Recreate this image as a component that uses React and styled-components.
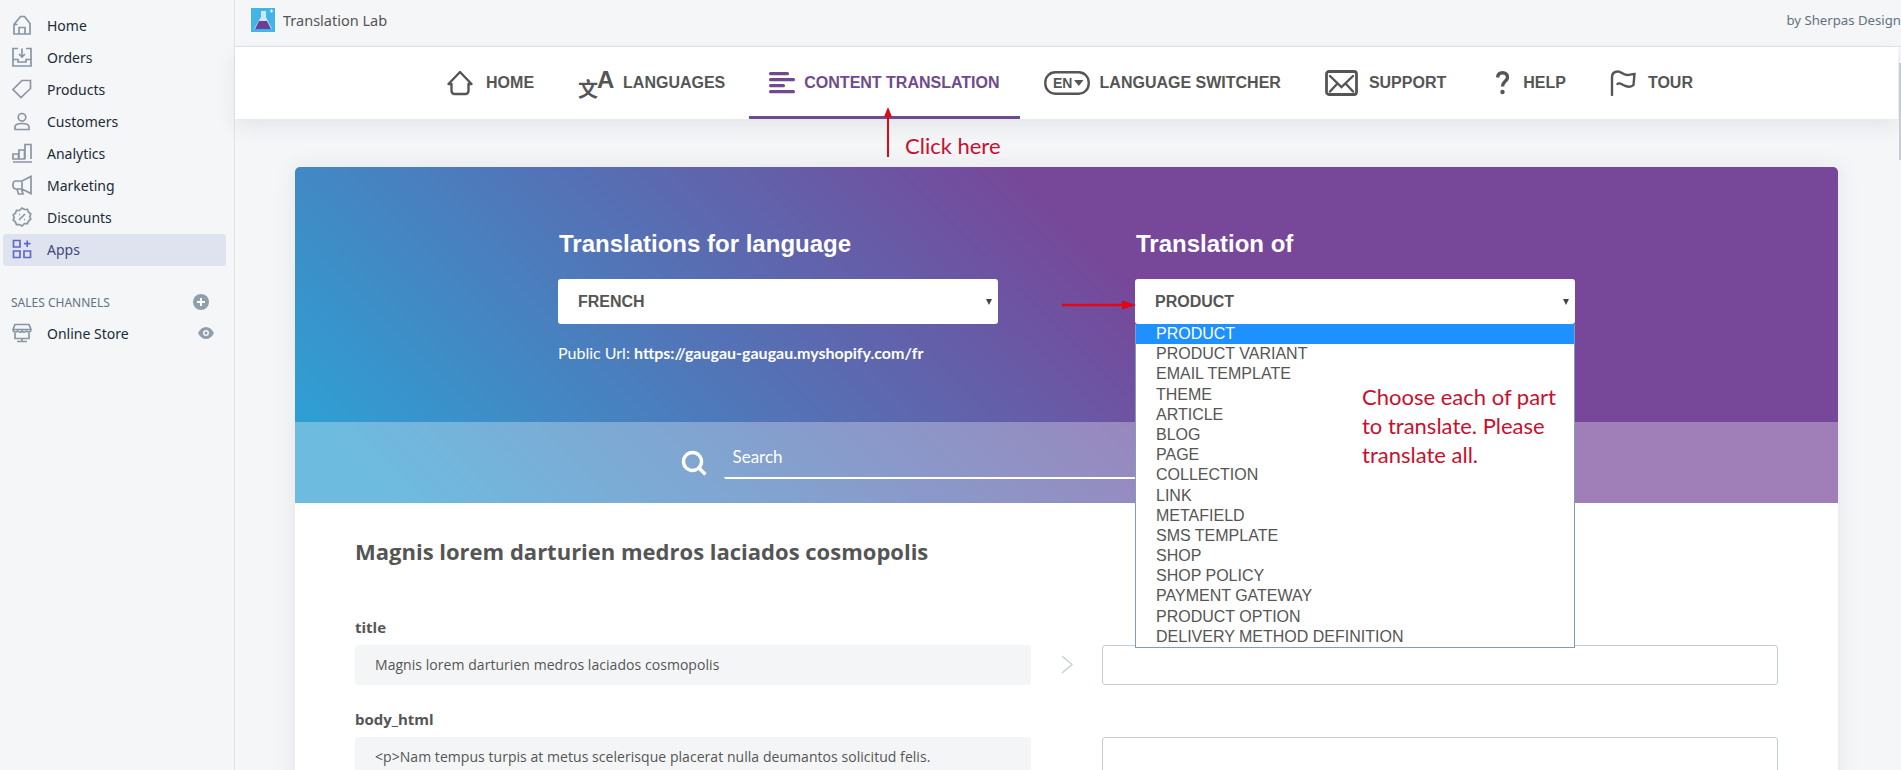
import React from 'react'
import styled, { createGlobalStyle } from 'styled-components'

const NAV = [
    { label: 'HOME', icon: <HomeGlyph />, gap: 13 },
    { label: 'LANGUAGES', icon: <LangGlyph />, gap: 8 },
    { label: 'CONTENT TRANSLATION', icon: <ContentGlyph />, gap: 9, active: true },
    { label: 'LANGUAGE SWITCHER', icon: <SwitcherGlyph />, gap: 10 },
    { label: 'SUPPORT', icon: <SupportGlyph />, gap: 11 },
    { label: 'HELP', icon: <HelpGlyph />, gap: 14 },
    { label: 'TOUR', icon: <TourGlyph />, gap: 12 },
]

const SIDE = [
    { label: 'Home', path: 'M2 9.500 8.500 1.500h4l5.500 7V19H2zM2 9.500h3.500M7 19v-6.500h6V19' },
    { label: 'Orders', path: 'M6 1.500H1V19h18V1.500h-5M10 1.500V10M7 7l3 3 3-3M1 12.500h5V15h8v-2.500h5' },
    { label: 'Products', path: 'M18.500 1.500H10L1 10.500 9 18.500l9.500-9zM14.500 5h.1' },
    { label: 'Customers', path: 'M10 2.500a3.800 3.800 0 1 1 0 7.600 3.800 3.800 0 0 1 0-7.600zM3 18.500V16c0-2.500 3-3.500 7-3.500s7 1 7 3.500v2.500z' },
    { label: 'Analytics', path: 'M1 19h19M1 16v-5h5.500v5zM7 16V7h5.500v9zM13 16V1.500h6V16' },
    { label: 'Marketing', path: 'M19 1.500v17L10 14H4a3 3 0 0 1-3-3V9a3 3 0 0 1 3-3h6zM5 14l1.500 5H11l-1.500-5M10 6v8' },
    { label: 'Discounts', path: 'M10 1l2.500 1.500 3-.2 1 2.700 2.300 2-1 2.500 1 2.500-2.300 2-1 2.700-3-.2L10 19l-2.500-1.500-3 .2-1-2.700-2.300-2 1-2.500-1-2.500 2.300-2 1-2.700 3 .2zM7 13l6-6M7 7.500h1M12 12.500h1' },
    { label: 'Apps', path: 'M1.500 1.500H8V8H1.500zM1.500 12H8v6.500H1.500zM12 12h6.500v6.500H12zM15.200 1.500V8M12 4.700h6.500', active: true },
]

const OPTIONS = [
    'PRODUCT', 'PRODUCT VARIANT', 'EMAIL TEMPLATE', 'THEME', 'ARTICLE', 'BLOG', 'PAGE', 'COLLECTION',
    'LINK', 'METAFIELD', 'SMS TEMPLATE', 'SHOP', 'SHOP POLICY', 'PAYMENT GATEWAY', 'PRODUCT OPTION',
    'DELIVERY METHOD DEFINITION',
]

function HomeGlyph() {
    return (
        <svg width="26" height="26" viewBox="0 0 26 26" fill="none" stroke="#555" strokeWidth="2.400" strokeLinejoin="round">
            <path d="M4.500 14H1.500L13 2l11.500 12h-3v7a3 3 0 0 1-3 3h-11a3 3 0 0 1-3-3z" />
        </svg>
    )
}

function LangGlyph() {
    return (
        <svg width="37" height="40" viewBox="0 0 37 40" fill="#555">
            <text x="0" y="34" fontSize="20" fontFamily="'Noto Sans CJK SC', sans-serif">文</text>
            <text x="19" y="25" fontSize="24" fontWeight="bold" fontFamily="'Liberation Sans', sans-serif">A</text>
        </svg>
    )
}

function ContentGlyph() {
    return (
        <svg width="26" height="24" viewBox="0 0 26 24" fill="#6f4a8e">
            <rect y="1" width="20" height="3.200" rx="1.500" />
            <rect y="7" width="26" height="3.200" rx="1.500" />
            <rect y="13" width="16" height="3.200" rx="1.500" />
            <rect y="19" width="26" height="3.200" rx="1.500" />
        </svg>
    )
}

function SwitcherGlyph() {
    return (
        <svg width="46" height="24" viewBox="0 0 46 24" fill="none" stroke="#555">
            <rect x="1.300" y="1.300" width="43.400" height="21.400" rx="10" strokeWidth="2.400" />
            <text x="9" y="17" fontSize="14" fill="#555" stroke="none" fontFamily="'Liberation Sans', sans-serif">EN</text>
            <path fill="#555" stroke="none" d="M30 9h9.500l-4.750 6z" />
        </svg>
    )
}

function SupportGlyph() {
    return (
        <svg width="33" height="26" viewBox="0 0 33 26" fill="none" stroke="#555" strokeWidth="2.400" strokeLinecap="round">
            <rect x="1.500" y="1.500" width="30" height="23" rx="2.500" strokeWidth="2.800" />
            <path d="M5 6l11.500 11L28 6M5 21.500l7-7.500M28 21.500 21 14" />
        </svg>
    )
}

function HelpGlyph() {
    return (
        <svg width="19" height="24" viewBox="-6 0 19 24" fill="none" stroke="#555" strokeWidth="3.400">
            <path d="M1.500 6.500C2 3 4 1.800 6.500 1.800c3.200 0 5 1.800 5 4.400 0 4.300-5 4-5 9.300" />
            <circle cx="6.500" cy="21" r="2.200" fill="#555" stroke="none" />
        </svg>
    )
}

function TourGlyph() {
    return (
        <svg width="26" height="26" viewBox="0 0 26 26" fill="none" stroke="#555" strokeWidth="2.400" strokeLinecap="round">
            <path d="M2 25V7C2 3 5 1.500 8 1.500c3 0 5 3.500 9 3.500 3 0 5.500-1 7.500-1l-1 11c-2 2-5 2-8 1s-6-4-8-2" />
        </svg>
    )
}

function SearchGlyph() {
    return (
        <svg width="26" height="26" viewBox="0 0 26 26" fill="none" stroke="#fff" strokeWidth="3.400">
            <circle cx="11.500" cy="11.500" r="9" />
            <path d="m18 18 6.500 6.500" />
        </svg>
    )
}

function Logo() {
    return (
        <svg width="24" height="24" viewBox="0 0 24 24">
            <rect width="24" height="24" fill="#41b6e6" />
            <path d="M10 3h5v6l6 12H3L10 9z" fill="#cfe6f3" />
            <path d="M8 13h8l4 8H4z" fill="#6b3f98" />
            <path d="M19 3h3M20.500 1.500v3" stroke="#fff" strokeWidth="1" />
        </svg>
    )
}

function App() {
    return (
        <Page>
            <GlobalStyle />
            <Sidebar>
                {SIDE.map(item => (
                    <SideItem key={item.label} $active={item.active}>
                        <SideIcon viewBox="0 0 20 20" $active={item.active}>
                            <path d={item.path} />
                        </SideIcon>
                        {item.label}
                    </SideItem>
                ))}
                <ChannelHead>
                    SALES CHANNELS
                    <svg width="16" height="16" viewBox="0 0 16 16">
                        <circle cx="8" cy="8" r="8" fill="#919eab" />
                        <path d="M8 4v8M4 8h8" stroke="#fff" strokeWidth="2" />
                    </svg>
                </ChannelHead>
                <SideItem>
                    <SideIcon viewBox="0 0 20 20">
                        <path d="M3 1.500h14l2 5c0 3-3 3-4.500 1.500-1.500 1.500-3.500 1.500-4.500 0-1 1.500-3 1.500-4.500 0C4 9.500 1 9.500 1 6.500zM3 10v5.500h14V10M10 15.500v3M5 18.500h10M1 6.500h18" />
                    </SideIcon>
                    <SideLabel>Online Store</SideLabel>
                    <svg width="16" height="12" viewBox="0 0 16 12">
                        <path d="M0 6c2-4 5-6 8-6s6 2 8 6c-2 4-5 6-8 6s-6-2-8-6z" fill="#919eab" />
                        <circle cx="8" cy="6" r="3" fill="#f4f6f8" />
                        <circle cx="8" cy="6" r="1.500" fill="#919eab" />
                    </svg>
                </SideItem>
            </Sidebar>
            <Main>
                <TopBar>
                    <Logo />
                    <AppName>Translation Lab</AppName>
                    <Vendor>by Sherpas Design</Vendor>
                </TopBar>
                <Nav>
                    {NAV.map(item => (
                        <NavItem key={item.label} $active={item.active} $gap={item.gap}>
                            {item.icon}
                            {item.label}
                        </NavItem>
                    ))}
                </Nav>
                <Content>
                    <Card>
                        <Hero>
                            <Pickers>
                                <Picker>
                                    <PickerTitle>Translations for language</PickerTitle>
                                    <Select>FRENCH<Caret /></Select>
                                    <PublicUrl>Public Url: <b>https://gaugau-gaugau.myshopify.com/fr</b></PublicUrl>
                                </Picker>
                                <Picker>
                                    <PickerTitle>Translation of</PickerTitle>
                                    <Select>
                                        PRODUCT<Caret />
                                        <Dropdown>
                                            {OPTIONS.map((option, i) => (
                                                <Option key={option} $selected={i === 0}>{option}</Option>
                                            ))}
                                        </Dropdown>
                                    </Select>
                                </Picker>
                            </Pickers>
                            <SearchBand>
                                <SearchGlyph />
                                <SearchInput>Search</SearchInput>
                            </SearchBand>
                        </Hero>
                        <Body>
                            <ItemTitle>Magnis lorem darturien medros laciados cosmopolis</ItemTitle>
                            <Field>
                                <FieldLabel>title</FieldLabel>
                                <FieldRow>
                                    <Source>Magnis lorem darturien medros laciados cosmopolis</Source>
                                    <svg width="12" height="20" viewBox="0 0 12 20" fill="none" stroke="#c4cdd5" strokeWidth="1.300">
                                        <path d="m1 1 10 8.500L1 18" />
                                    </svg>
                                    <Target />
                                </FieldRow>
                            </Field>
                            <Field>
                                <FieldLabel>body_html</FieldLabel>
                                <FieldRow>
                                    <Source $tall>&lt;p&gt;Nam tempus turpis at metus scelerisque placerat nulla deumantos solicitud felis.</Source>
                                    <span />
                                    <Target $tall />
                                </FieldRow>
                            </Field>
                        </Body>
                    </Card>
                </Content>
            </Main>

            <ScrollThumb />
            <ClickNote>
                <svg width="12" height="50" viewBox="0 0 12 50">
                    <path d="M6 8v42" stroke="#e30613" strokeWidth="2" />
                    <path d="M6 0l4 10H2z" fill="#e30613" />
                </svg>
                <span>Click here</span>
            </ClickNote>
            <PickNote>
                <svg width="74" height="10" viewBox="0 0 74 10">
                    <path d="M0 5h62" stroke="#e30613" strokeWidth="2.500" />
                    <path d="M74 5 60 .5v9z" fill="#e30613" />
                </svg>
            </PickNote>
            <ChooseNote>Choose each of part<br />to translate. Please<br />translate all.</ChooseNote>
        </Page>
    )
}

const GlobalStyle = createGlobalStyle`
    html, body {
        margin: 0;
        height: 100%;
        overflow: hidden;
        background: #f4f6f8;
    }
`

const Page = styled.div`
    position: relative;
    display: grid;
    grid-template-columns: 235px 1fr;
    height: 770px;
    overflow: hidden;
    font-family: "Noto Sans", sans-serif;
    color: #212b36;
`

const Sidebar = styled.aside`
    box-sizing: border-box;
    padding: 10px 8px 0 3px;
    border-right: 1px solid #dfe3e8;
    background: #f4f6f8;
`

const SideItem = styled.div`
    display: flex;
    align-items: center;
    box-sizing: border-box;
    height: 32px;
    padding: 0 12px 2px 9px;
    border-radius: 3px;
    font-size: 14px;
    background: ${({$active}) => $active ? '#dfe3f0' : 'transparent'};
    color: ${({$active}) => $active ? '#43467f' : '#212b36'};
`

const SideIcon = styled.svg`
    flex: none;
    width: 20px;
    height: 20px;
    margin-right: 15px;
    fill: none;
    stroke: ${({$active}) => $active ? '#5c6ac4' : '#8a96a3'};
    stroke-width: 1.700;
`

const SideLabel = styled.span`
    flex: 1;
`

const ChannelHead = styled.div`
    display: flex;
    align-items: center;
    justify-content: space-between;
    margin-top: 20px;
    height: 32px;
    padding: 0 17px 0 8px;
    font-size: 12px;
    color: #637381;
`

const Main = styled.main`
    min-width: 0;
`

const TopBar = styled.header`
    display: flex;
    align-items: center;
    box-sizing: border-box;
    height: 47px;
    padding: 0 0 6px 16px;
    border-bottom: 1px solid #dfe3e8;
    font-size: 14.500px;
    color: #555;
`

const AppName = styled.span`
    margin-left: 8px;
    flex: 1;
`

const Vendor = styled.span`
    font-size: 13.200px;
    color: #637381;
`

const Nav = styled.nav`
    position: relative;
    display: flex;
    justify-content: center;
    gap: 4px;
    height: 72px;
    margin-right: 3px;
    padding-left: 7px;
    background: #fff;
    box-shadow: 0 8px 20px rgba(33, 43, 54, .08);
`

const NavItem = styled.div`
    display: flex;
    align-items: center;
    gap: ${({$gap}) => $gap}px;
    box-sizing: border-box;
    padding: 3px 20px 0;
    font: bold 16px "Liberation Sans", sans-serif;
    color: ${({$active}) => $active ? '#6f4a8e' : '#555'};
    border-bottom: 3px solid ${({$active}) => $active ? '#6f4a8e' : 'transparent'};
`

const ScrollThumb = styled.div`
    position: absolute;
    top: 63px;
    right: 0;
    width: 2px;
    height: 97px;
    background: #c8ccd0;
`

const Content = styled.div`
    padding: 48px 63px 0 60px;
`

const Card = styled.section`
    border-radius: 5px;
    overflow: visible;
    background: #fff;
    box-shadow: 0 0 24px rgba(33, 43, 54, .08);
`

const Hero = styled.div`
    border-radius: 5px 5px 0 0;
    background: linear-gradient(45deg, #2f9fd3 5%, #77489a 56%);
`

const Pickers = styled.div`
    display: grid;
    grid-template-columns: 440px 440px;
    justify-content: center;
    column-gap: 137px;
    height: 255px;
    box-sizing: border-box;
    padding-top: 63px;
`

const Picker = styled.div`
    color: #fff;
`

const PickerTitle = styled.h2`
    margin: 0 0 21px 1px;
    font: bold 24px/28px "Liberation Sans", sans-serif;
`

const Select = styled.div`
    position: relative;
    display: flex;
    align-items: center;
    height: 45px;
    padding-left: 20px;
    border-radius: 3px;
    background: #fff;
    color: #555;
    font: bold 16px "Liberation Sans", sans-serif;
`

const Caret = styled.i`
    position: absolute;
    right: 6px;
    top: 20px;
    border: 3.500px solid transparent;
    border-top: 6px solid #444;
    border-bottom: 0;
`

const Dropdown = styled.div`
    position: absolute;
    z-index: 2;
    top: 45px;
    left: 0;
    right: 0;
    box-sizing: border-box;
    height: 324px;
    border: 1px solid #7f9db9;
    border-top: 0;
    background: #fff;
`

const Option = styled.div`
    height: 20.200px;
    padding-left: 20px;
    font: 16px/20.200px "Liberation Sans", sans-serif;
    color: ${({$selected}) => $selected ? '#fff' : '#555'};
    background: ${({$selected}) => $selected ? '#1e90ff' : 'transparent'};
`

const PublicUrl = styled.p`
    margin: 18px 0 0;
    font: 16px/22px Lato, sans-serif;
`

const SearchBand = styled.div`
    display: flex;
    align-items: center;
    justify-content: center;
    gap: 17px;
    height: 81px;
    background: rgba(255, 255, 255, .3);
`

const SearchInput = styled.div`
    box-sizing: border-box;
    width: 729px;
    height: 32px;
    padding: 0 9px;
    border-bottom: 2px solid #fff;
    border-radius: 0 0 2px 2px;
    font: 17px/20px Lato, sans-serif;
    color: #fff;
`

const Body = styled.div`
    padding: 32px 60px 0;
`

const ItemTitle = styled.h1`
    margin: 0 0 51px;
    font: 700 22px/32px "Open Sans", sans-serif;
    color: #555;
`

const Field = styled.div`
    margin-bottom: 25px;
`

const FieldLabel = styled.div`
    margin-bottom: 9px;
    font: 700 15px/18px "Open Sans", sans-serif;
    color: #555;
`

const FieldRow = styled.div`
    display: grid;
    grid-template-columns: 676px 71px 676px;
    justify-items: center;
    align-items: center;
`

const Source = styled.div`
    justify-self: stretch;
    box-sizing: border-box;
    height: ${({$tall}) => $tall ? '120px' : '40px'};
    padding: 10px 20px;
    border-radius: 3px;
    background: #f4f5f7;
    font: 14px/20px "Open Sans", sans-serif;
    letter-spacing: .05px;
    color: #555;
`

const Target = styled.div`
    justify-self: stretch;
    box-sizing: border-box;
    height: ${({$tall}) => $tall ? '120px' : '40px'};
    border: 1px solid #c4cdd5;
    border-radius: 3px;
    background: #fff;
`

const Note = styled.div`
    position: absolute;
    z-index: 3;
    font-family: Lato, sans-serif;
    color: #c8102e;
`

const ClickNote = styled(Note)`
    left: 882px;
    top: 107px;
    display: flex;
    align-items: flex-start;
    gap: 11px;
    font-size: 22px;
    line-height: 28px;

    span {
        margin-top: 25px;
    }
`

const PickNote = styled(Note)`
    left: 1062px;
    top: 300px;
    line-height: 0;
`

const ChooseNote = styled(Note)`
    left: 1362px;
    top: 382px;
    font-size: 22px;
    line-height: 29px;
`

export default App
